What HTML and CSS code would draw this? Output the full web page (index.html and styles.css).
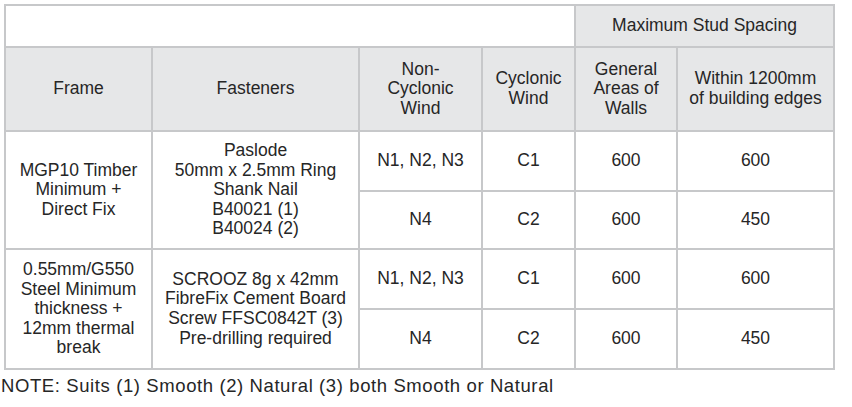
FILE: index.html
```html
<!DOCTYPE html>
<html lang="en">
<head>
<meta charset="utf-8">
<title>Stud Spacing</title>
<link rel="stylesheet" href="styles.css">
</head>
<body>
<table class="spec">
  <colgroup>
    <col class="c-frame">
    <col class="c-fast">
    <col class="c-non">
    <col class="c-cyc">
    <col class="c-gen">
    <col class="c-edge">
  </colgroup>
  <thead>
    <tr class="r-top">
      <th class="blank" colspan="4"></th>
      <th class="head" colspan="2">Maximum Stud Spacing</th>
    </tr>
    <tr class="r-head">
      <th class="head">Frame</th>
      <th class="head">Fasteners</th>
      <th class="head">Non-<br>Cyclonic<br>Wind</th>
      <th class="head">Cyclonic<br>Wind</th>
      <th class="head">General<br>Areas of<br>Walls</th>
      <th class="head">Within 1200mm<br>of building edges</th>
    </tr>
  </thead>
  <tbody>
    <tr class="r-a1">
      <td rowspan="2">MGP10 Timber<br>Minimum +<br>Direct Fix</td>
      <td rowspan="2">Paslode<br>50mm x 2.5mm Ring<br>Shank Nail<br>B40021 (1)<br>B40024 (2)</td>
      <td>N1, N2, N3</td>
      <td>C1</td>
      <td>600</td>
      <td>600</td>
    </tr>
    <tr class="r-a2">
      <td>N4</td>
      <td>C2</td>
      <td>600</td>
      <td>450</td>
    </tr>
    <tr class="r-b1">
      <td rowspan="2">0.55mm/G550<br>Steel Minimum<br>thickness +<br>12mm thermal<br>break</td>
      <td rowspan="2">SCROOZ 8g x 42mm<br>FibreFix Cement Board<br>Screw FFSC0842T (3)<br>Pre-drilling required</td>
      <td>N1, N2, N3</td>
      <td>C1</td>
      <td>600</td>
      <td>600</td>
    </tr>
    <tr class="r-b2">
      <td>N4</td>
      <td>C2</td>
      <td>600</td>
      <td>450</td>
    </tr>
  </tbody>
</table>
<p class="note">NOTE: Suits (1) Smooth (2) Natural (3) both Smooth or Natural</p>
</body>
</html>
```

FILE: styles.css
```css
html, body {
  margin: 0;
  padding: 0;
  background: #ffffff;
}

body {
  font-family: "Liberation Sans", Arial, Helvetica, sans-serif;
  font-size: 17.5px;
  line-height: 19.6px;
  color: #262626;
}

.spec {
  margin: 4px 0 0 4px;
  border-collapse: collapse;
  table-layout: fixed;
  width: 831px;
}

.c-frame { width: 147px; }
.c-fast { width: 207px; }
.c-non { width: 123px; }
.c-cyc { width: 93px; }
.c-gen { width: 102px; }
.c-edge { width: 157px; }

.spec th,
.spec td {
  border: 2px solid #c7c8ca;
  padding: 0 1px;
  text-align: center;
  vertical-align: middle;
  font-weight: normal;
}

.spec .head {
  background: #e6e7e8;
}

.spec .blank {
  background: #ffffff;
}

.r-top { height: 42px; }
.r-head { height: 84px; }
.r-a1 { height: 60px; }
.r-a2 { height: 58px; }
.r-b1 { height: 60px; }
.r-b2 { height: 60px; }

.note {
  margin: 6px 0 0 1px;
  font-size: 18.5px;
  letter-spacing: 0.6px;
}
```
